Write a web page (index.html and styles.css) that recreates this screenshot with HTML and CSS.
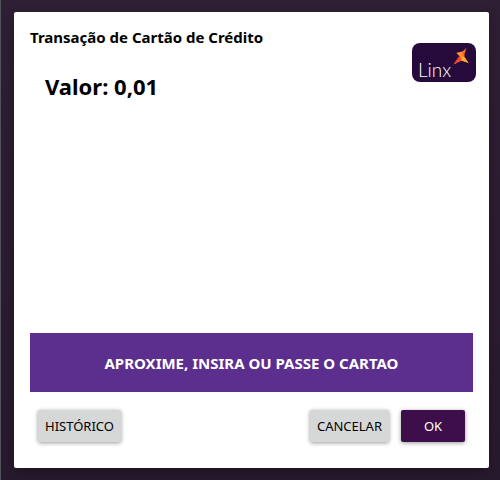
FILE: index.html
```html
<!DOCTYPE html>
<html lang="pt-BR">
<head>
<meta charset="utf-8">
<meta name="viewport" content="width=device-width, initial-scale=1">
<title>Transação de Cartão de Crédito</title>
<link rel="stylesheet" href="styles.css">
</head>
<body>
<main class="dialog">
  <header class="header">
    <div>
      <h1 class="title">Transação de Cartão de Crédito</h1>
      <p class="amount">Valor: 0,01</p>
    </div>
    <div class="logo">
      <span class="logo-name">Linx</span>
      <svg class="logo-mark" viewBox="0 0 16 17" aria-hidden="true">
        <path fill="#ff6a26" d="M13.500 0 11.500 6 11.500 9 15.500 15 8.500 12.500 0.500 16.500 6.500 8 3.500 5 9.500 3.500Z"/>
        <path fill="#f4472f" d="M6.500 8 8.500 12.500 0.500 16.500Z"/>
        <path fill="#ffab2c" d="M8 8 11.500 9 15.500 15 8.500 12.500Z"/>
        <path fill="#ff9030" d="M3.500 5 9.500 3.500 9.500 7.500 6.500 8Z"/>
      </svg>
    </div>
  </header>
  <p class="banner" role="status">APROXIME, INSIRA OU PASSE O CARTAO</p>
  <footer class="actions">
    <button class="button history" type="button">HISTÓRICO</button>
    <button class="button" type="button">CANCELAR</button>
    <button class="button primary" type="button">OK</button>
  </footer>
</main>
</body>
</html>
```
FILE: styles.css
```css
* {
  box-sizing: border-box;
}

body {
  margin: 0;
  min-height: 100vh;
  padding: 12px 11px 12px 13px;
  display: flex;
  border-left: 1px solid #50545a;
  background: linear-gradient(#2f1f35, #281a2e);
  font-family: "Noto Sans", "Open Sans", sans-serif;
  color: #000;
}

.dialog {
  flex: 1;
  display: flex;
  flex-direction: column;
  padding: 16px;
  border-radius: 2px;
  background: #fff;
  box-shadow: 0 4px 12px rgba(0, 0, 0, 0.3);
}

.header {
  flex: 1;
  display: flex;
  justify-content: space-between;
  align-items: flex-start;
}

.title {
  margin: 0;
  font-size: 15px;
  line-height: 18px;
}

.amount {
  margin: 26px 0 0 15px;
  font-size: 22px;
  font-weight: 700;
  line-height: 28px;
}

.logo {
  display: flex;
  justify-content: space-between;
  width: 64px;
  height: 39px;
  margin: 15px -3px 0 0;
  padding: 5px 7px 5px 6px;
  border-radius: 8px;
  background: #260a3b;
}

.logo-name {
  align-self: flex-end;
  font-family: Lato, sans-serif;
  font-size: 19px;
  font-weight: 300;
  line-height: 14px;
  color: #fff;
}

.logo-mark {
  width: 16px;
  height: 17px;
}

.banner {
  margin: 0;
  padding: 20px 8px 19px;
  background: #5c2e8e;
  color: #fff;
  font-size: 15px;
  font-weight: 700;
  line-height: 20px;
  text-align: center;
}

.actions {
  display: flex;
  gap: 12px;
  padding: 18px 8px 10px;
}

.button {
  min-width: 64px;
  height: 32px;
  padding: 0 7px;
  border: 0;
  border-radius: 2px;
  background: #d6d8d7;
  box-shadow: 0 1px 4px rgba(0, 0, 0, 0.4);
  color: #000;
  font-family: inherit;
  font-size: 13px;
}

.history {
  margin-right: auto;
}

.primary {
  background: #3d0e49;
  color: #fff;
}
```
